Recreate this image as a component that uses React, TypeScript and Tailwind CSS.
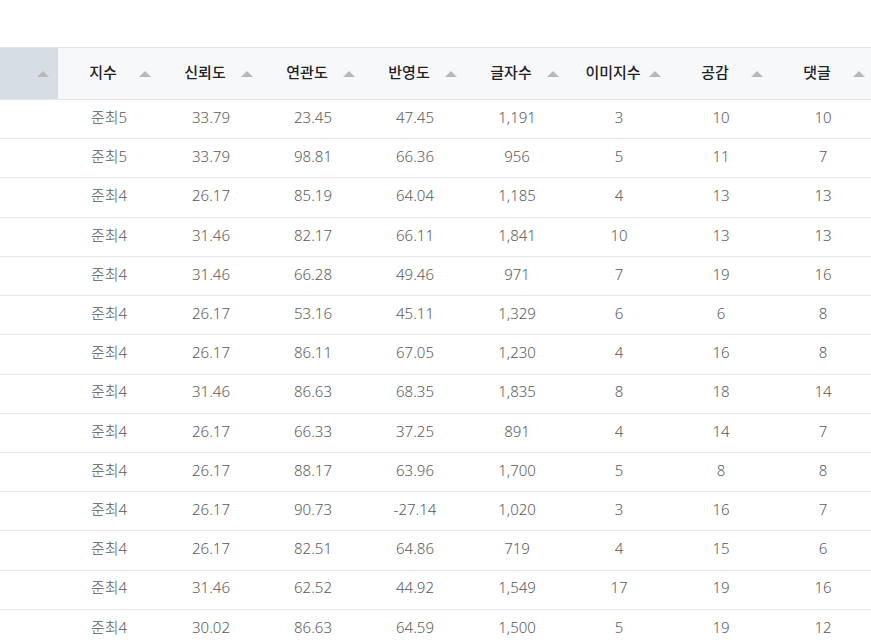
import React from "react";

type Row = [string, string, string, string, string, string, string, string];

const headers = ["지수", "신뢰도", "연관도", "반영도", "글자수", "이미지수", "공감", "댓글"];

const rows: Row[] = [
  ["준최5", "33.79", "23.45", "47.45", "1,191", "3", "10", "10"],
  ["준최5", "33.79", "98.81", "66.36", "956", "5", "11", "7"],
  ["준최4", "26.17", "85.19", "64.04", "1,185", "4", "13", "13"],
  ["준최4", "31.46", "82.17", "66.11", "1,841", "10", "13", "13"],
  ["준최4", "31.46", "66.28", "49.46", "971", "7", "19", "16"],
  ["준최4", "26.17", "53.16", "45.11", "1,329", "6", "6", "8"],
  ["준최4", "26.17", "86.11", "67.05", "1,230", "4", "16", "8"],
  ["준최4", "31.46", "86.63", "68.35", "1,835", "8", "18", "14"],
  ["준최4", "26.17", "66.33", "37.25", "891", "4", "14", "7"],
  ["준최4", "26.17", "88.17", "63.96", "1,700", "5", "8", "8"],
  ["준최4", "26.17", "90.73", "-27.14", "1,020", "3", "16", "7"],
  ["준최4", "26.17", "82.51", "64.86", "719", "4", "15", "6"],
  ["준최4", "31.46", "62.52", "44.92", "1,549", "17", "19", "16"],
  ["준최4", "30.02", "86.63", "64.59", "1,500", "5", "19", "12"],
];

const SortArrow = () => (
  <svg width="12" height="6" viewBox="0 0 12 6" className="absolute right-[9px] top-[23px]">
    <polygon points="6,0 12,6 0,6" fill="#b8b8b8" />
  </svg>
);

const App = () => {
  return (
    <div className="h-[640px] w-[871px] overflow-hidden bg-white font-['Noto_Sans','Noto_Sans_CJK_KR',sans-serif]">
      <div className="h-[47px]" />
      <table className="w-[874px] table-fixed border-collapse">
        <colgroup>
          <col className="w-[58px]" />
          {headers.map((h) => (
            <col key={h} className="w-[102px]" />
          ))}
        </colgroup>
        <thead>
          <tr className="h-[52px] border-y border-[#e3e5e8]">
            <th className="relative bg-[#d6dde5] p-0">
              <SortArrow />
            </th>
            {headers.map((h) => (
              <th
                key={h}
                className="relative bg-[#f7f8fa] p-0 pr-[12px] pb-[2px] text-center text-[15px] font-medium text-[#222]"
              >
                {h}
                <SortArrow />
              </th>
            ))}
          </tr>
        </thead>
        <tbody>
          {rows.map((row, i) => (
            <tr key={i} className="h-[39.23px] border-b border-[#e6e6e6]">
              <td className="p-0" />
              {row.map((cell, j) => (
                <td
                  key={j}
                  className="p-0 pb-[4px] text-center text-[15px] font-light text-[#5a5a5a]"
                >
                  {cell}
                </td>
              ))}
            </tr>
          ))}
        </tbody>
      </table>
    </div>
  );
};

export default App;
